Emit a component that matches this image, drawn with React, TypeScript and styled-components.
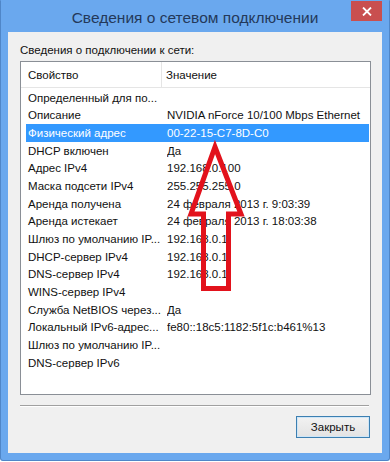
import React from "react";
import styled, { createGlobalStyle } from "styled-components";

const GlobalStyle = createGlobalStyle`
  html, body {
    margin: 0;
    padding: 0;
    background: #ffffff;
  }
  body {
    font-family: "Liberation Sans", Arial, sans-serif;
  }
`;

const Window = styled.div`
  position: relative;
  width: 390px;
  height: 461px;
  box-sizing: border-box;
  background: #6aa8ee;
  border: 1px solid #4f86c8;
  border-top-color: #6aa8ee;
  border-radius: 0 0 3px 3px;
  display: flex;
  flex-direction: column;
  padding: 0 7px 7px 7px;
`;

const TitleBar = styled.div`
  height: 32px;
  display: grid;
  grid-template-columns: 1fr auto 1fr;
  align-items: center;
`;

const Title = styled.div`
  grid-column: 2;
  font-size: 15.5px;
  color: #24395a;
  padding-top: 2px;
  white-space: nowrap;
`;

const CloseButton = styled.div`
  grid-column: 3;
  justify-self: end;
  align-self: start;
  width: 31px;
  height: 20px;
  background: #c94f4f;
  display: flex;
  align-items: center;
  justify-content: center;
`;

const Client = styled.div`
  flex: 1;
  background: #f0f0f0;
  display: flex;
  flex-direction: column;
  padding: 11px 11px 15px 12px;
`;

const Caption = styled.div`
  font-size: 11.5px;
  line-height: 15px;
  color: #111;
`;

const ListBox = styled.div`
  margin-top: 3px;
  height: 334px;
  box-sizing: border-box;
  background: #ffffff;
  border: 1px solid #8a8f96;
  display: flex;
  flex-direction: column;
`;

const HeaderRow = styled.div`
  display: grid;
  grid-template-columns: 141px 1fr;
  height: 25px;
  border-bottom: 1px solid #e5e5e5;
`;

const HeaderCell = styled.div<{ $divider?: boolean }>`
  font-size: 11.5px;
  color: #111;
  display: flex;
  align-items: center;
  padding-left: ${(p) => (p.$divider ? "7px" : "4px")};
  border-right: ${(p) => (p.$divider ? "1px solid #e5e5e5" : "none")};
  padding-top: 1px;
`;

const Rows = styled.div`
  display: flex;
  flex-direction: column;
  padding: 1px 1px 0 5px;
`;

const Row = styled.div<{ $selected?: boolean }>`
  display: grid;
  grid-template-columns: 141px 1fr;
  height: 17.67px;
  align-items: center;
  font-size: 11.5px;
  color: ${(p) => (p.$selected ? "#ffffff" : "#111")};
  background: ${(p) => (p.$selected ? "#3399ff" : "transparent")};
`;

const Cell = styled.div<{ $first?: boolean }>`
  padding-left: ${(p) => (p.$first ? "2px" : "0")};
  white-space: nowrap;
  overflow: hidden;
`;

const Separator = styled.div`
  margin-top: 10px;
  margin-right: 2px;
  height: 1px;
  background: #a0a0a0;
  border-bottom: 1px solid #ffffff;
`;

const Footer = styled.div`
  display: flex;
  justify-content: flex-end;
  margin-top: 9px;
  padding-right: 1px;
`;

const Button = styled.div`
  width: 74px;
  height: 22px;
  box-sizing: border-box;
  border: 1px solid #3c7fb1;
  background: linear-gradient(#f2f2f2, #e3e3e3);
  font-size: 11.5px;
  color: #111;
  display: flex;
  align-items: center;
  justify-content: center;
  box-shadow: inset 0 0 0 1px #cfe6f7;
`;

const ArrowOverlay = styled.svg`
  position: absolute;
  left: 0;
  top: 0;
  pointer-events: none;
`;

const rows: [string, string][] = [
  ["Определенный для по...", ""],
  ["Описание", "NVIDIA nForce 10/100 Mbps Ethernet"],
  ["Физический адрес", "00-22-15-C7-8D-C0"],
  ["DHCP включен", "Да"],
  ["Адрес IPv4", "192.168.0.100"],
  ["Маска подсети IPv4", "255.255.255.0"],
  ["Аренда получена", "24 февраля 2013 г. 9:03:39"],
  ["Аренда истекает", "24 февраля 2013 г. 18:03:38"],
  ["Шлюз по умолчанию IP...", "192.168.0.1"],
  ["DHCP-сервер IPv4", "192.168.0.1"],
  ["DNS-сервер IPv4", "192.168.0.1"],
  ["WINS-сервер IPv4", ""],
  ["Служба NetBIOS через...", "Да"],
  ["Локальный IPv6-адрес...", "fe80::18c5:1182:5f1c:b461%13"],
  ["Шлюз по умолчанию IP...", ""],
  ["DNS-сервер IPv6", ""],
];

export default function App() {
  return (
    <>
      <GlobalStyle />
      <Window>
        <TitleBar>
          <Title>Сведения о сетевом подключении</Title>
          <CloseButton>
            <svg width="10" height="9" viewBox="0 0 10 9">
              <path d="M1 0.5 L9 8.5 M9 0.5 L1 8.5" stroke="#ffffff" strokeWidth="1.8" />
            </svg>
          </CloseButton>
        </TitleBar>
        <Client>
          <Caption>Сведения о подключении к сети:</Caption>
          <ListBox>
            <HeaderRow>
              <HeaderCell $divider>Свойство</HeaderCell>
              <HeaderCell>Значение</HeaderCell>
            </HeaderRow>
            <Rows>
              {rows.map(([name, value], i) => (
                <Row key={i} $selected={i === 2}>
                  <Cell $first>{name}</Cell>
                  <Cell>{value}</Cell>
                </Row>
              ))}
            </Rows>
          </ListBox>
          <Separator />
          <Footer>
            <Button>Закрыть</Button>
          </Footer>
        </Client>
        <ArrowOverlay width="390" height="462" viewBox="0 0 390 462">
          <path
            d="M214 146 L240 213 L227.5 213 L227.5 287.5 L202.5 287.5 L202.5 213 L190 213 Z"
            fill="none"
            stroke="#e2121c"
            strokeWidth="5"
            strokeLinejoin="miter"
          />
        </ArrowOverlay>
      </Window>
    </>
  );
}
